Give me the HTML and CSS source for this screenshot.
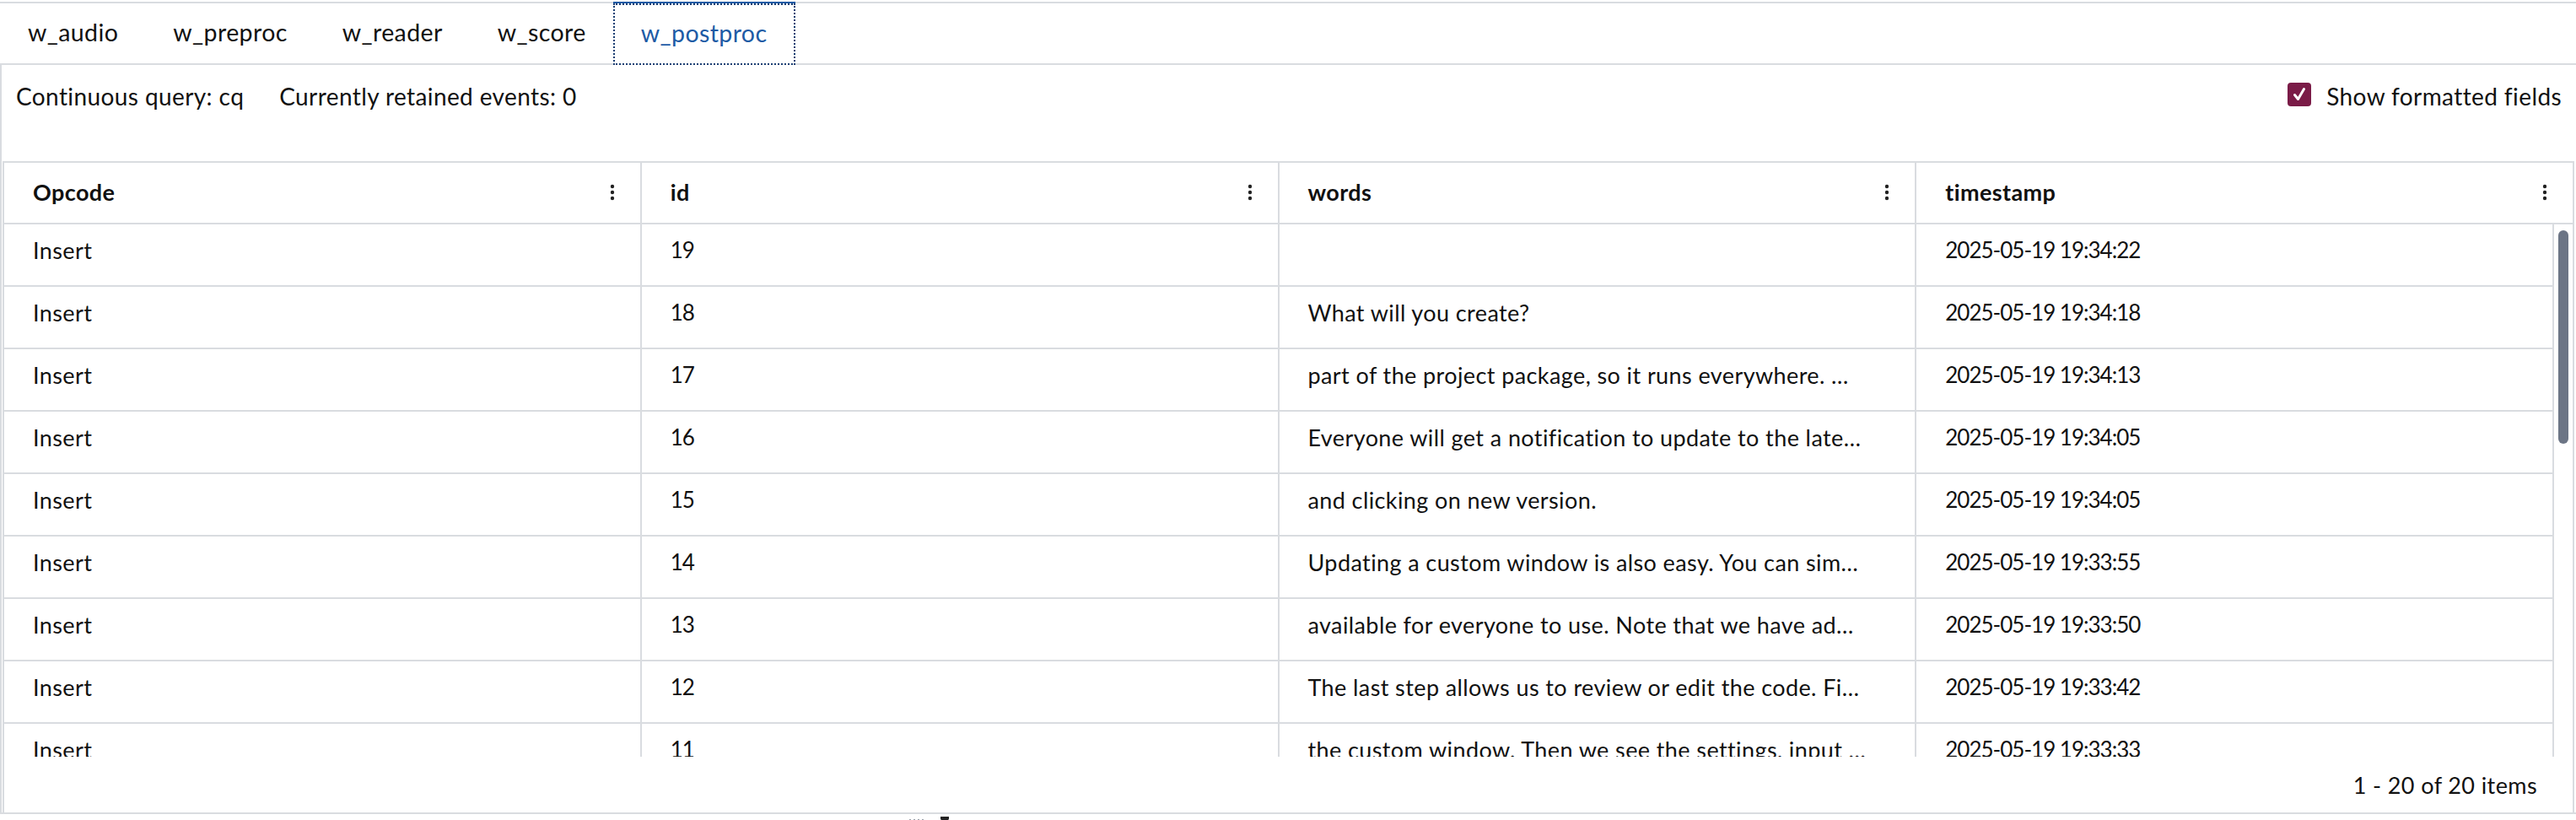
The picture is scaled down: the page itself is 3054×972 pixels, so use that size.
FILE: index.html
```html
<!DOCTYPE html>
<html lang="en">
<head>
<meta charset="utf-8">
<title>w_postproc</title>
<link rel="stylesheet" href="styles.css">
</head>
<body>
<div class="tabs">
  <div class="tab">w_audio</div>
  <div class="tab">w_preproc</div>
  <div class="tab">w_reader</div>
  <div class="tab">w_score</div>
  <div class="tab active"><span class="tab-focus">w_postproc</span></div>
</div>
<div class="panel">
  <div class="toolbar">
    <span class="info">Continuous query: cq</span>
    <span class="info">Currently retained events: 0</span>
    <label class="check">
      <span class="box"><svg width="28" height="28" viewBox="0 0 28 28"><path d="M8.5 14.5 L12.5 19.5 L19.5 7.5" fill="none" stroke="#fff" stroke-width="3" stroke-linecap="round" stroke-linejoin="round"/></svg></span>
      <span>Show formatted fields</span>
    </label>
  </div>
  <div class="grid">
    <div class="head">
      <div class="hcell"><span>Opcode</span><svg class="dots" width="6" height="20" viewBox="0 0 6 20"><circle cx="3" cy="3" r="2.2"/><circle cx="3" cy="10" r="2.2"/><circle cx="3" cy="17" r="2.2"/></svg></div>
      <div class="hcell"><span>id</span><svg class="dots" width="6" height="20" viewBox="0 0 6 20"><circle cx="3" cy="3" r="2.2"/><circle cx="3" cy="10" r="2.2"/><circle cx="3" cy="17" r="2.2"/></svg></div>
      <div class="hcell"><span>words</span><svg class="dots" width="6" height="20" viewBox="0 0 6 20"><circle cx="3" cy="3" r="2.2"/><circle cx="3" cy="10" r="2.2"/><circle cx="3" cy="17" r="2.2"/></svg></div>
      <div class="hcell last"><span>timestamp</span><svg class="dots" width="6" height="20" viewBox="0 0 6 20"><circle cx="3" cy="3" r="2.2"/><circle cx="3" cy="10" r="2.2"/><circle cx="3" cy="17" r="2.2"/></svg></div>
    </div>
    <div class="body">
      <div class="rows">
        <div class="row"><div class="cell">Insert</div><div class="cell num">19</div><div class="cell"></div><div class="cell num last">2025-05-19 19:34:22</div></div>
        <div class="row"><div class="cell">Insert</div><div class="cell num">18</div><div class="cell">What will you create?</div><div class="cell num last">2025-05-19 19:34:18</div></div>
        <div class="row"><div class="cell">Insert</div><div class="cell num">17</div><div class="cell">part of the project package, so it runs everywhere. …</div><div class="cell num last">2025-05-19 19:34:13</div></div>
        <div class="row"><div class="cell">Insert</div><div class="cell num">16</div><div class="cell">Everyone will get a notification to update to the late…</div><div class="cell num last">2025-05-19 19:34:05</div></div>
        <div class="row"><div class="cell">Insert</div><div class="cell num">15</div><div class="cell">and clicking on new version.</div><div class="cell num last">2025-05-19 19:34:05</div></div>
        <div class="row"><div class="cell">Insert</div><div class="cell num">14</div><div class="cell">Updating a custom window is also easy. You can sim…</div><div class="cell num last">2025-05-19 19:33:55</div></div>
        <div class="row"><div class="cell">Insert</div><div class="cell num">13</div><div class="cell">available for everyone to use. Note that we have ad…</div><div class="cell num last">2025-05-19 19:33:50</div></div>
        <div class="row"><div class="cell">Insert</div><div class="cell num">12</div><div class="cell">The last step allows us to review or edit the code. Fi…</div><div class="cell num last">2025-05-19 19:33:42</div></div>
        <div class="row"><div class="cell">Insert</div><div class="cell num">11</div><div class="cell">the custom window. Then we see the settings, input …</div><div class="cell num last">2025-05-19 19:33:33</div></div>
      </div>
      <div class="scroll"><div class="thumb"></div></div>
    </div>
    <div class="foot">1 - 20 of 20 items</div>
  </div>
</div>
<div class="stray"><svg width="64" height="8" viewBox="0 0 64 8"><g fill="#9aa0a8"><rect x="0" y="3" width="2" height="5"/><rect x="5" y="3" width="2" height="5"/><rect x="10" y="3" width="2" height="5"/><rect x="15" y="3" width="2" height="5"/></g><rect x="37" y="0" width="10" height="3" fill="#222"/><polygon points="37,3 47,3 42,8" fill="#222"/></svg></div>
</body>
</html>
```

FILE: styles.css
```css
* { box-sizing: border-box; }

html, body {
  margin: 0;
  padding: 0;
  background: #ffffff;
}

body {
  font-family: Lato, "Noto Sans", "Liberation Sans", sans-serif;
  font-size: 28px;
  letter-spacing: 0.4px;
  color: #111111;
  width: 3054px;
  height: 972px;
  overflow: hidden;
}

.tabs {
  margin-top: 2px;
  height: 75px;
  border-top: 2px solid #d9dce0;
  border-bottom: 2px solid #d9dce0;
  display: flex;
  align-items: stretch;
  font-size: 28.5px;
}

.tab {
  display: flex;
  align-items: center;
  padding: 0 32px 4px 33px;
  color: #111111;
  white-space: nowrap;
}

.tab.active {
  margin-left: 0;
  margin-top: -2px;
  margin-bottom: -2px;
  padding: 0;
  background: #ffffff;
  border-top: 2px solid #1d5ba5;
  color: #1d5ba5;
}

.tab-focus {
  display: flex;
  align-items: center;
  height: 100%;
  padding: 0 32px 4px 31px;
  border: 2px dotted #1b3f73;
}

.panel {
  border-left: 2px solid #d9dce0;
  border-bottom: 2px solid #d9dce0;
  height: 888px;
  display: flex;
  flex-direction: column;
}

.toolbar {
  height: 114px;
  flex: none;
  display: flex;
  align-items: flex-start;
  padding: 17px 17px 0 17px;
  line-height: 40px;
}

.info {
  margin-right: 42px;
  white-space: nowrap;
}

.check {
  margin-left: auto;
  display: flex;
  align-items: center;
  gap: 18px;
  white-space: nowrap;
}

.box {
  width: 28px;
  height: 28px;
  border-radius: 4px;
  background: #7a1b47;
  display: block;
  margin-top: -4px;
}

.box svg { display: block; }

.grid {
  flex: 1;
  margin: 0 2px 0 1px;
  border-top: 2px solid #d9dce0;
  border-left: 2px solid #d9dce0;
  border-right: 2px solid #d9dce0;
  display: flex;
  flex-direction: column;
  min-height: 0;
}

.head {
  flex: none;
  height: 73px;
  display: grid;
  grid-template-columns: repeat(4, 1fr);
  padding-right: 22px;
  border-bottom: 2px solid #d9dce0;
}

.hcell {
  display: flex;
  align-items: center;
  justify-content: space-between;
  padding: 0 30px 2px 34px;
  border-right: 2px solid #d9dce0;
  font-weight: 700;
  font-size: 27px;
}

.hcell.last { border-right: none; padding-right: 8px; }

.dots { fill: #222222; flex: none; }

.body {
  flex: 1;
  min-height: 0;
  display: flex;
  overflow: hidden;
}

.rows {
  flex: 1;
  min-width: 0;
}

.row {
  height: 74px;
  display: grid;
  grid-template-columns: repeat(4, 1fr);
  border-bottom: 2px solid #d9dce0;
}

.cell {
  display: flex;
  align-items: center;
  padding: 0 50px 12px 34px;
  border-right: 2px solid #d9dce0;
  white-space: nowrap;
  overflow: hidden;
  text-overflow: ellipsis;
  font-size: 27px;
}

.cell.num {
  font-size: 26px;
  letter-spacing: -1px;
}

.cell.last { border-right: 2px solid #d9dce0; }

.scroll {
  width: 22px;
  flex: none;
  padding: 7px 4px 0 5px;
}

.thumb {
  width: 12px;
  height: 253px;
  border-radius: 6px;
  background: #6c7585;
}

.foot {
  flex: none;
  height: 66px;
  display: flex;
  align-items: center;
  justify-content: flex-end;
  padding: 0 42px 0 0;
  font-size: 27px;
}

.stray {
  padding-left: 1078px;
  height: 7px;
  overflow: hidden;
  line-height: 0;
}
```
